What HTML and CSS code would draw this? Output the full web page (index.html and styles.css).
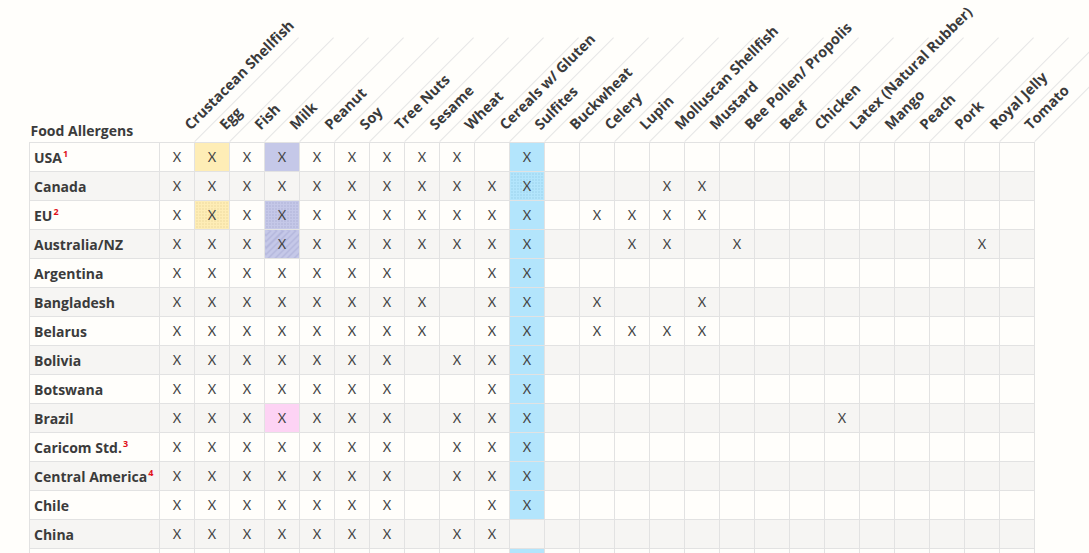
FILE: index.html
```html
<!DOCTYPE html>
<html lang="en">
<head>
<meta charset="utf-8">
<title>Food Allergens</title>
<link rel="stylesheet" href="styles.css">
</head>
<body>
<div class="wrap">
<table class="allergens">
<colgroup>
<col class="c0">
<col class="c"><col class="c"><col class="c"><col class="c"><col class="c">
<col class="c"><col class="c"><col class="c"><col class="c"><col class="c">
<col class="c"><col class="c"><col class="c"><col class="c"><col class="c">
<col class="c"><col class="c"><col class="c"><col class="c"><col class="c">
<col class="c"><col class="c"><col class="c"><col class="c"><col class="c">
</colgroup>
<thead>
<tr>
<th class="corner">Food Allergens</th>
<th class="rot"><div><span>Crustacean Shellfish</span></div></th>
<th class="rot"><div><span>Egg</span></div></th>
<th class="rot"><div><span>Fish</span></div></th>
<th class="rot"><div><span>Milk</span></div></th>
<th class="rot"><div><span>Peanut</span></div></th>
<th class="rot"><div><span>Soy</span></div></th>
<th class="rot"><div><span>Tree Nuts</span></div></th>
<th class="rot"><div><span>Sesame</span></div></th>
<th class="rot"><div><span>Wheat</span></div></th>
<th class="rot"><div><span>Cereals w/ Gluten</span></div></th>
<th class="rot"><div><span>Sulfites</span></div></th>
<th class="rot"><div><span>Buckwheat</span></div></th>
<th class="rot"><div><span>Celery</span></div></th>
<th class="rot"><div><span>Lupin</span></div></th>
<th class="rot"><div><span>Molluscan Shellfish</span></div></th>
<th class="rot"><div><span>Mustard</span></div></th>
<th class="rot"><div><span>Bee Pollen/ Propolis</span></div></th>
<th class="rot"><div><span>Beef</span></div></th>
<th class="rot"><div><span>Chicken</span></div></th>
<th class="rot"><div><span>Latex (Natural Rubber)</span></div></th>
<th class="rot"><div><span>Mango</span></div></th>
<th class="rot"><div><span>Peach</span></div></th>
<th class="rot"><div><span>Pork</span></div></th>
<th class="rot"><div><span>Royal Jelly</span></div></th>
<th class="rot"><div><span>Tomato</span></div></th>
</tr>
</thead>
<tbody>
<tr><th class="name">USA<sup>1</sup></th>
<td>X</td><td class="y">X</td><td>X</td><td class="p">X</td><td>X</td><td>X</td><td>X</td><td>X</td><td>X</td><td></td><td class="b">X</td>
<td></td><td></td><td></td><td></td><td></td><td></td><td></td><td></td><td></td><td></td><td></td><td></td><td></td><td></td></tr>
<tr><th class="name">Canada</th>
<td>X</td><td>X</td><td>X</td><td>X</td><td>X</td><td>X</td><td>X</td><td>X</td><td>X</td><td>X</td><td class="bd">X</td>
<td></td><td></td><td></td><td>X</td><td>X</td><td></td><td></td><td></td><td></td><td></td><td></td><td></td><td></td><td></td></tr>
<tr><th class="name">EU<sup>2</sup></th>
<td>X</td><td class="yd">X</td><td>X</td><td class="pd">X</td><td>X</td><td>X</td><td>X</td><td>X</td><td>X</td><td>X</td><td class="b">X</td>
<td></td><td>X</td><td>X</td><td>X</td><td>X</td><td></td><td></td><td></td><td></td><td></td><td></td><td></td><td></td><td></td></tr>
<tr><th class="name">Australia/NZ</th>
<td>X</td><td>X</td><td>X</td><td class="ps">X</td><td>X</td><td>X</td><td>X</td><td>X</td><td>X</td><td>X</td><td class="b">X</td>
<td></td><td></td><td>X</td><td>X</td><td></td><td>X</td><td></td><td></td><td></td><td></td><td></td><td></td><td>X</td><td></td></tr>
<tr><th class="name">Argentina</th>
<td>X</td><td>X</td><td>X</td><td>X</td><td>X</td><td>X</td><td>X</td><td></td><td></td><td>X</td><td class="b">X</td>
<td></td><td></td><td></td><td></td><td></td><td></td><td></td><td></td><td></td><td></td><td></td><td></td><td></td><td></td></tr>
<tr><th class="name">Bangladesh</th>
<td>X</td><td>X</td><td>X</td><td>X</td><td>X</td><td>X</td><td>X</td><td>X</td><td></td><td>X</td><td class="b">X</td>
<td></td><td>X</td><td></td><td></td><td>X</td><td></td><td></td><td></td><td></td><td></td><td></td><td></td><td></td><td></td></tr>
<tr><th class="name">Belarus</th>
<td>X</td><td>X</td><td>X</td><td>X</td><td>X</td><td>X</td><td>X</td><td>X</td><td></td><td>X</td><td class="b">X</td>
<td></td><td>X</td><td>X</td><td>X</td><td>X</td><td></td><td></td><td></td><td></td><td></td><td></td><td></td><td></td><td></td></tr>
<tr><th class="name">Bolivia</th>
<td>X</td><td>X</td><td>X</td><td>X</td><td>X</td><td>X</td><td>X</td><td></td><td>X</td><td>X</td><td class="b">X</td>
<td></td><td></td><td></td><td></td><td></td><td></td><td></td><td></td><td></td><td></td><td></td><td></td><td></td><td></td></tr>
<tr><th class="name">Botswana</th>
<td>X</td><td>X</td><td>X</td><td>X</td><td>X</td><td>X</td><td>X</td><td></td><td></td><td>X</td><td class="b">X</td>
<td></td><td></td><td></td><td></td><td></td><td></td><td></td><td></td><td></td><td></td><td></td><td></td><td></td><td></td></tr>
<tr><th class="name">Brazil</th>
<td>X</td><td>X</td><td>X</td><td class="k">X</td><td>X</td><td>X</td><td>X</td><td></td><td>X</td><td>X</td><td class="b">X</td>
<td></td><td></td><td></td><td></td><td></td><td></td><td></td><td></td><td>X</td><td></td><td></td><td></td><td></td><td></td></tr>
<tr><th class="name">Caricom Std.<sup>3</sup></th>
<td>X</td><td>X</td><td>X</td><td>X</td><td>X</td><td>X</td><td>X</td><td></td><td>X</td><td>X</td><td class="b">X</td>
<td></td><td></td><td></td><td></td><td></td><td></td><td></td><td></td><td></td><td></td><td></td><td></td><td></td><td></td></tr>
<tr><th class="name">Central America<sup>4</sup></th>
<td>X</td><td>X</td><td>X</td><td>X</td><td>X</td><td>X</td><td>X</td><td></td><td>X</td><td>X</td><td class="b">X</td>
<td></td><td></td><td></td><td></td><td></td><td></td><td></td><td></td><td></td><td></td><td></td><td></td><td></td><td></td></tr>
<tr><th class="name">Chile</th>
<td>X</td><td>X</td><td>X</td><td>X</td><td>X</td><td>X</td><td>X</td><td></td><td></td><td>X</td><td class="b">X</td>
<td></td><td></td><td></td><td></td><td></td><td></td><td></td><td></td><td></td><td></td><td></td><td></td><td></td><td></td></tr>
<tr><th class="name">China</th>
<td>X</td><td>X</td><td>X</td><td>X</td><td>X</td><td>X</td><td>X</td><td></td><td>X</td><td>X</td><td></td>
<td></td><td></td><td></td><td></td><td></td><td></td><td></td><td></td><td></td><td></td><td></td><td></td><td></td><td></td></tr>
<tr><th class="name">Colombia</th>
<td>X</td><td>X</td><td>X</td><td>X</td><td>X</td><td>X</td><td>X</td><td></td><td></td><td>X</td><td class="b">X</td>
<td></td><td></td><td></td><td></td><td></td><td></td><td></td><td></td><td></td><td></td><td></td><td></td><td></td><td></td></tr>
</tbody>
</table>
</div>
</body>
</html>
```

FILE: styles.css
```css
html, body {
  margin: 0;
  padding: 0;
  background: #fffefb;
  overflow: hidden;
}

body {
  font-family: "Open Sans", Lato, sans-serif;
  color: #3b3b3b;
}

.wrap {
  padding-left: 29px;
}

.allergens {
  border-collapse: collapse;
  table-layout: fixed;
  width: 1005px;
}

.allergens col.c0 { width: 130px; }
.allergens col.c { width: 35px; }

.allergens thead th {
  height: 139px;
  padding: 0;
  vertical-align: bottom;
  border: none;
}

.allergens th.corner {
  text-align: left;
  padding: 0 0 3px 1px;
  font-size: 14px;
  line-height: 16px;
  font-weight: 700;
  white-space: nowrap;
}

.allergens th.rot {
  white-space: nowrap;
}

.allergens th.rot div {
  width: 147px;
  transform: translateX(35px) rotate(-45deg);
  transform-origin: 0 100%;
}

.allergens th.rot span {
  display: block;
  box-sizing: border-box;
  width: 147px;
  border-bottom: 1px solid #e6e6e6;
  padding: 0 0 7px 5px;
  line-height: 16px;
  font-size: 14.5px;
  font-weight: 700;
  text-align: left;
}

.allergens tbody tr:nth-child(even) {
  background: #f6f5f3;
}

.allergens tbody td,
.allergens tbody th {
  border: 1px solid #e2e2e2;
  height: 28px;
  padding: 0;
}

.allergens tbody td {
  text-align: center;
  font-family: Lato, "Open Sans", sans-serif;
  font-size: 13px;
  font-weight: 400;
  color: #444;
}

.allergens th.name {
  text-align: left;
  padding-left: 4px;
  font-size: 14px;
  font-weight: 700;
  white-space: nowrap;
}

.allergens sup {
  color: #e0101a;
  font-size: 9px;
  line-height: 0;
  vertical-align: 6px;
  margin-left: 1px;
}

.allergens td.y { background: #feedb6; }
.allergens td.p { background: #c5c8e8; }
.allergens td.b { background: #b3e5fc; }
.allergens td.k { background: #fdd3f4; }

.allergens td.yd {
  background-color: #feedb6;
  background-image: radial-gradient(circle, rgba(150, 120, 40, 0.3) 0.5px, transparent 0.8px);
  background-size: 3px 3px;
}

.allergens td.pd {
  background-color: #c5c8e8;
  background-image: radial-gradient(circle, rgba(70, 70, 130, 0.3) 0.5px, transparent 0.8px);
  background-size: 3px 3px;
}

.allergens td.bd {
  background-color: #b3e5fc;
  background-image: radial-gradient(circle, rgba(40, 110, 150, 0.3) 0.5px, transparent 0.8px);
  background-size: 3px 3px;
}

.allergens td.ps {
  background-color: #c5c8e8;
  background-image: repeating-linear-gradient(135deg, #c5c8e8 0 3px, #b3b6dc 3px 4.5px);
}
```
